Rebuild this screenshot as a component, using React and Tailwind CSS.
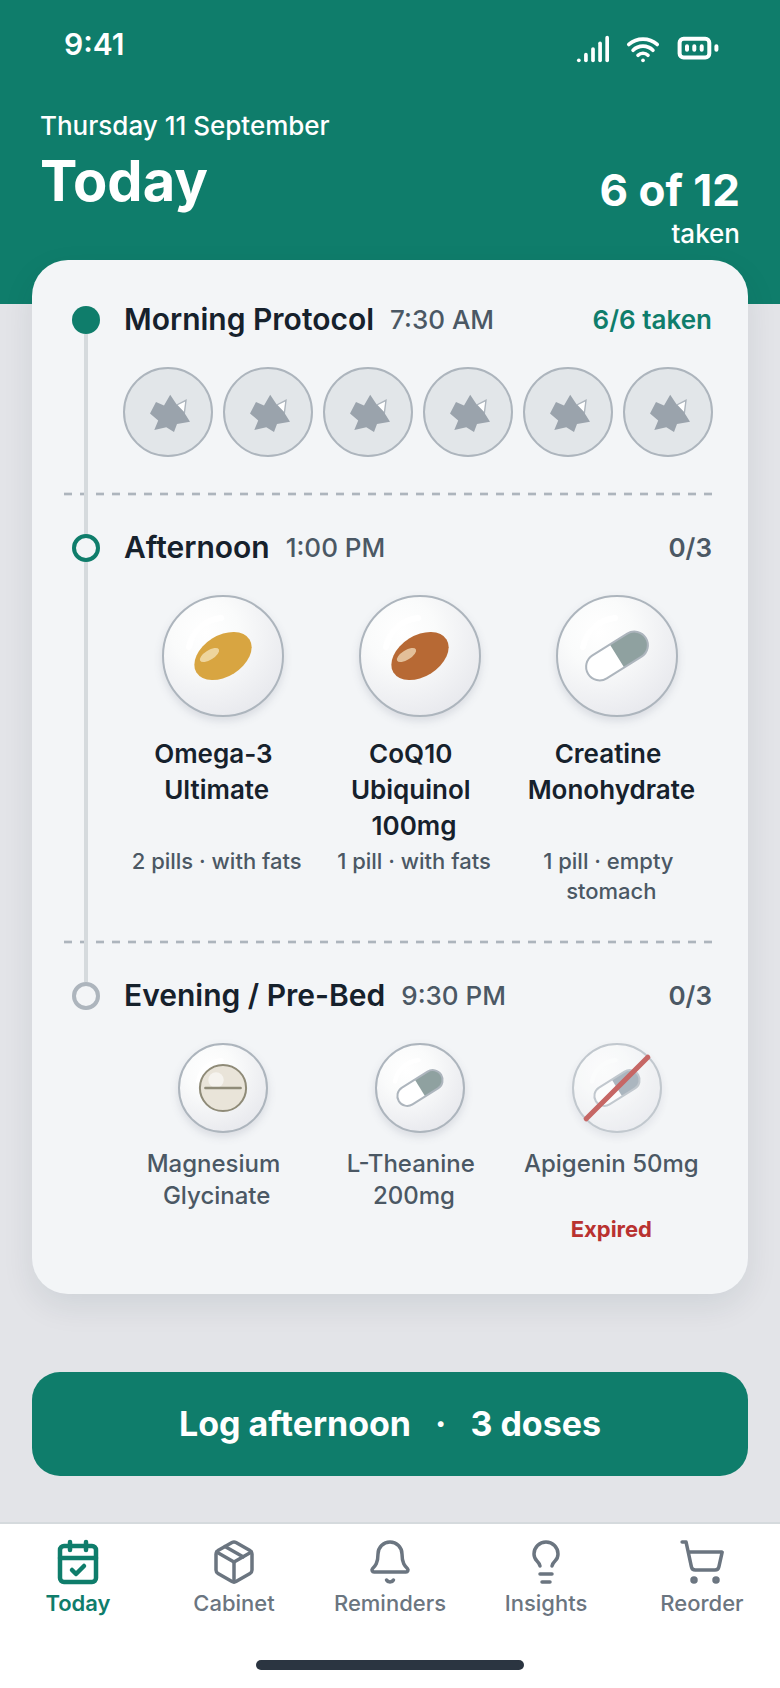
import React, { useState } from 'react';
import { Bell, CalendarCheck, Lightbulb, Package, ShoppingCart, Signal, Wifi } from 'lucide-react';

const afternoonDoses = [
    { name: 'Omega-3 Ultimate', note: '2 pills · with fats', shape: 'softgel', color: '#d8a541' },
    { name: 'CoQ10 Ubiquinol 100mg', note: '1 pill · with fats', shape: 'softgel', color: '#b76934' },
    { name: 'Creatine Monohydrate', note: '1 pill · empty stomach', shape: 'capsule', color: '#8fa1a0' },
];

const eveningDoses = [
    { name: 'Magnesium Glycinate', shape: 'tablet' },
    { name: 'L-Theanine 200mg', shape: 'capsule', color: '#8fa1a0' },
    { name: 'Apigenin 50mg', shape: 'capsule', color: '#8e9ca8', expired: true },
];

const tabs = [
    { label: 'Today', icon: CalendarCheck },
    { label: 'Cabinet', icon: Package },
    { label: 'Reminders', icon: Bell },
    { label: 'Insights', icon: Lightbulb },
    { label: 'Reorder', icon: ShoppingCart },
];

const BatteryIcon = () => (
    <svg width="44" height="34" viewBox="0 0 44 34" fill="none" stroke="currentColor" strokeWidth="4" strokeLinecap="round" aria-hidden="true">
        <rect x="3.6" y="6.7" width="29.7" height="18.7" rx="4" />
        <path d="M11 14.2v3.6M18.3 14.2v3.6M25.7 14.2v3.6M40.4 14.2v3.6" />
    </svg>
);

const PillShape = ({ shape, color }) => {
    if (shape === 'softgel') {
        return (
            <g>
                <ellipse rx="31.3" ry="20.5" transform="rotate(-32)" fill={color} />
                <ellipse rx="11" ry="4.7" transform="translate(-13.5 -1) rotate(-32)" fill="#fbeed0" opacity="0.65" />
            </g>
        );
    }

    if (shape === 'tablet') {
        return (
            <g>
                <circle r="31.5" fill="#e9e4d9" stroke="#8f8b78" strokeWidth="2" vectorEffect="non-scaling-stroke" />
                <circle cx="-9.5" cy="-11" r="10.5" fill="#fff" opacity="0.55" />
                <path d="M-24 0H24" stroke="#8f8b78" strokeWidth="3.4" strokeLinecap="round" />
            </g>
        );
    }

    return (
        <g transform="rotate(-32)">
            <rect x="-34" y="-13.5" width="68" height="27" rx="13.5" fill="#fff" />
            <path d="M0 -13.5H20.5A13.5 13.5 0 0 1 20.5 13.5H0Z" fill={color} />
            <rect x="-34" y="-13.5" width="68" height="27" rx="13.5" fill="none" stroke="#adb5bd" strokeWidth="2" vectorEffect="non-scaling-stroke" />
        </g>
    );
};

const PillBubble = ({ dose, className }) => (
    <svg
        viewBox="-60 -60 120 120"
        className={`${className} overflow-visible drop-shadow-[0_4px_4px_rgba(30,40,70,0.12)] ${dose.expired ? 'opacity-70' : ''}`}
        aria-hidden="true"
    >
        <defs>
            <radialGradient id="bubble" cx="0.35" cy="0.3" r="0.8">
                <stop offset="0" stopColor="#fff" />
                <stop offset="0.35" stopColor="#fafbfb" />
                <stop offset="1" stopColor="#e6e7ec" />
            </radialGradient>
        </defs>
        <circle r="60" fill="url(#bubble)" stroke="#adb5bd" strokeWidth="2" vectorEffect="non-scaling-stroke" />
        <path d="M-34 -9A36 36 0 0 1 -2 -38" fill="none" stroke="#fff" strokeWidth="6" strokeLinecap="round" />
        <PillShape shape={dose.shape} color={dose.color} />
        {dose.expired && <path d="M-42 42L42 -42" stroke="#b42c28" strokeWidth="7" strokeLinecap="round" />}
    </svg>
);

const TakenBubble = () => (
    <svg viewBox="-44 -44 88 88" className="size-22 overflow-visible" aria-hidden="true">
        <circle r="44" fill="#e2e6e9" stroke="#adb5bd" strokeWidth="2" />
        <path d="M8.7 -7L18 -11.7L16.3 1.5Z" fill="#fff" stroke="#adb5bd" strokeWidth="1.4" />
        <path d="M2.2 -17.3L9 -7L15.7 -0.3L22 9.7L9 12L6 20L-1.7 15.3L-13.7 18L-9.8 8.4L-18 1.5L-12 -10L-4 -6.5Z" fill="#9aa3ac" />
    </svg>
);

const SectionHeading = ({ title, time, count, done, dotClass }) => (
    <div className="flex items-center h-9 mb-[30px] pl-2">
        <span className={`relative size-7 shrink-0 rounded-full mr-6 ${dotClass}`} />
        <h2 className="pb-0.5 text-[30px] leading-9 font-semibold text-[#16212c]">{title}</h2>
        <span className="ml-4 text-[26px] leading-9 font-medium text-[#4b5864]">{time}</span>
        <span className={`ml-auto text-[26px] leading-9 font-semibold ${done ? 'text-[#0f7d6b]' : 'text-[#4b5864]'}`}>{count}</span>
    </div>
);

// dashed rule with softened top and bottom edges
const Divider = () => (
    <div className="h-1 my-[34px] bg-[repeating-linear-gradient(to_right,#adb5bd_0_8px,transparent_8px_16px)] [mask-image:linear-gradient(#0005_1px,#000_1px_3px,#0005_3px)]" />
);

const App = () => {
    const [activeTab, setActiveTab] = useState('Today');

    return (
        <div className="min-h-screen flex flex-col bg-[#e3e4e8] font-['Inter',sans-serif]">
            <header className="bg-[#0f7d6b] text-white pt-[26px] pb-[54px]">
                <div className="flex justify-between items-start pl-16 pr-15">
                    <span className="text-[30px] leading-9 font-semibold">9:41</span>
                    <div className="flex gap-4 pt-1.5">
                        <Signal size={34} strokeWidth={2.6} />
                        <Wifi size={34} strokeWidth={2.6} />
                        <BatteryIcon />
                    </div>
                </div>
                <div className="flex justify-between px-10 mt-11">
                    <div>
                        <p className="text-[26px] leading-8 font-medium">Thursday 11 September</p>
                        <h1 className="mt-[7px] text-[56px] leading-16 font-bold">Today</h1>
                    </div>
                    <div className="pt-[54px] text-right">
                        <p className="text-[44px] leading-13 font-bold">6 of 12</p>
                        <p className="mt-0.5 text-[26px] leading-8 font-medium">taken</p>
                    </div>
                </div>
            </header>

            <main className="px-8">
                <div className="relative -mt-11 rounded-[36px] bg-[#f3f5f7] pl-8 pr-9 pt-[42px] pb-[50px] shadow-[0_12px_32px_rgba(16,40,50,0.09)]">
                    <section>
                        <SectionHeading title="Morning Protocol" time="7:30 AM" count="6/6 taken" done dotClass="bg-[#0f7d6b]" />
                        <div className="flex justify-between pl-15 pb-0.5">
                            {[1, 2, 3, 4, 5, 6].map((n) => (
                                <TakenBubble key={n} />
                            ))}
                        </div>
                    </section>

                    <Divider />

                    <section>
                        <SectionHeading title="Afternoon" time="1:00 PM" count="0/3" dotClass="border-4 border-[#0f7d6b] bg-[#f3f5f7] z-10" />
                        <div className="grid grid-cols-3 pl-15 -mr-1">
                            {afternoonDoses.map((dose) => (
                                <button key={dose.name} type="button" className="flex flex-col items-center cursor-pointer">
                                    <PillBubble dose={dose} className="size-30" />
                                    <span className="w-full pr-3 mt-5 min-h-27 whitespace-break-spaces text-[26px] leading-9 font-semibold text-[#16212c]">{dose.name}</span>
                                    <span className="w-full pr-3 mt-0.5 whitespace-break-spaces text-[22px] leading-[30px] font-medium text-[#4b5864]">{dose.note}</span>
                                </button>
                            ))}
                        </div>
                    </section>

                    <Divider />

                    <section>
                        <SectionHeading title="Evening / Pre-Bed" time="9:30 PM" count="0/3" dotClass="border-4 border-[#adb5bd] bg-[#f3f5f7] z-10" />
                        <div className="grid grid-cols-3 pl-15 -mr-1">
                            {eveningDoses.map((dose) => (
                                <button key={dose.name} type="button" className="flex flex-col items-center cursor-pointer" disabled={dose.expired}>
                                    <PillBubble dose={dose} className="size-22" />
                                    <span className="w-full pr-3 mt-4 min-h-16 whitespace-break-spaces text-[24px] leading-8 font-medium text-[#4b5864]">{dose.name}</span>
                                    {dose.expired && (
                                        <span className="w-full pr-3 mt-0.5 text-[22px] leading-[30px] font-bold text-[#b93230]">Expired</span>
                                    )}
                                </button>
                            ))}
                        </div>
                    </section>

                    {/* timeline rail, runs from the first dot to the last */}
                    <div className="absolute left-[52px] top-[74px] bottom-[312px] w-1 bg-[#d5dadd]" />
                </div>

                <button type="button" className="flex w-full items-center justify-center gap-6 mt-[78px] mb-[46px] h-26 pb-0.5 rounded-[28px] bg-[#0f7d6b] text-[34px] font-bold text-white cursor-pointer">
                    <span>Log afternoon</span>
                    <span>·</span>
                    <span>3 doses</span>
                </button>
            </main>

            <footer className="mt-auto border-t-2 border-[#d5dadd] bg-white pt-3.5 pb-[18px]">
                <nav className="grid grid-cols-5">
                    {tabs.map(({ label, icon: Icon }) => {
                        const active = label === activeTab;
                        return (
                            <button
                                key={label}
                                type="button"
                                onClick={() => setActiveTab(label)}
                                className={`flex flex-col items-center gap-[3px] cursor-pointer text-[22px] leading-7 ${active ? 'font-semibold text-[#0f7d6b]' : 'font-medium text-[#6b7580]'}`}
                            >
                                <Icon size={48} strokeWidth={active ? 2.25 : 1.75} />
                                {label}
                            </button>
                        );
                    })}
                </nav>
                <div className="mx-auto mt-[43px] h-2.5 w-67 rounded-full bg-[#2b3541]" />
            </footer>
        </div>
    );
};

export default App;
